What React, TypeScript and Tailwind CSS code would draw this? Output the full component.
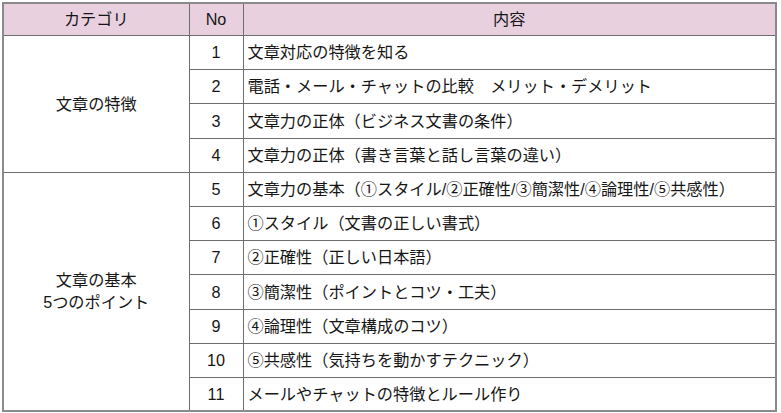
const font = "font-['Liberation_Sans','Noto_Sans_CJK_JP',sans-serif]";

type Row = { no: number; text: string; h: string };

const groups: { category: string[]; rows: Row[] }[] = [
  {
    category: ["文章の特徴"],
    rows: [
      { no: 1, text: "文章対応の特徴を知る", h: "h-[34px]" },
      { no: 2, text: "電話・メール・チャットの比較　メリット・デメリット", h: "h-[34px]" },
      { no: 3, text: "文章力の正体（ビジネス文書の条件）", h: "h-[35px]" },
      { no: 4, text: "文章力の正体（書き言葉と話し言葉の違い）", h: "h-[34px]" },
    ],
  },
  {
    category: ["文章の基本", "5つのポイント"],
    rows: [
      { no: 5, text: "文章力の基本（①スタイル/②正確性/③簡潔性/④論理性/⑤共感性）", h: "h-[34px]" },
      { no: 6, text: "①スタイル（文書の正しい書式）", h: "h-[34px]" },
      { no: 7, text: "②正確性（正しい日本語）", h: "h-[34px]" },
      { no: 8, text: "③簡潔性（ポイントとコツ・工夫）", h: "h-[35px]" },
      { no: 9, text: "④論理性（文章構成のコツ）", h: "h-[34px]" },
      { no: 10, text: "⑤共感性（気持ちを動かすテクニック）", h: "h-[34px]" },
      { no: 11, text: "メールやチャットの特徴とルール作り", h: "h-[34px]" },
    ],
  },
];

export default function App() {
  return (
    <div className={`w-[781px] h-[413px] bg-white pt-[2px] pl-[2px] ${font}`}>
      <table className="w-[775px] border-collapse border-2 border-[#8a8a8a] text-[16.2px] leading-[20px] text-[#161616] table-fixed">
        <colgroup>
          <col className="w-[186px]" />
          <col className="w-[54px]" />
          <col />
        </colgroup>
        <thead>
          <tr className="h-[32px] bg-[#e9d0de]">
            <th className="border border-[#6e6e6e] font-normal text-center">カテゴリ</th>
            <th className="border border-[#6e6e6e] font-normal text-center">No</th>
            <th className="border border-[#6e6e6e] font-normal text-center">内容</th>
          </tr>
        </thead>
        <tbody>
          {groups.map((g) =>
            g.rows.map((r, i) => (
              <tr key={r.no} className={r.h}>
                {i === 0 && (
                  <td rowSpan={g.rows.length} className="border border-[#6e6e6e] text-center align-middle leading-[22px]">
                    {g.category.map((c) => (
                      <div key={c}>{c}</div>
                    ))}
                  </td>
                )}
                <td className="border border-[#6e6e6e] text-center">{r.no}</td>
                <td className="border border-[#6e6e6e] pl-[4px] whitespace-nowrap">{r.text}</td>
              </tr>
            ))
          )}
        </tbody>
      </table>
    </div>
  );
}
